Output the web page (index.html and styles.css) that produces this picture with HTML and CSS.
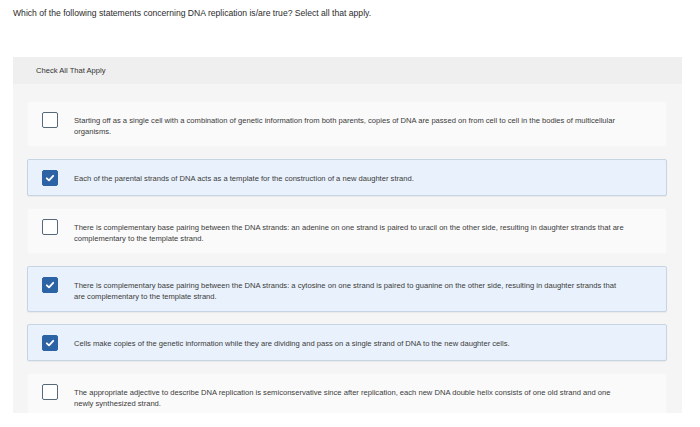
FILE: index.html
```html
<!DOCTYPE html>
<html>
<head>
<meta charset="utf-8">
<link rel="stylesheet" href="styles.css">
</head>
<body>
<p class="question">Which of the following statements concerning DNA replication is/are true? Select all that apply.</p>
<section class="panel">
  <div class="panel-head">Check All That Apply</div>
  <div class="panel-body">
    <div class="option">
      <span class="box"></span>
      <span class="label">Starting off as a single cell with a combination of genetic information from both parents, copies of DNA are passed on from cell to cell in the bodies of multicellular organisms.</span>
    </div>
    <div class="option checked">
      <span class="box"><svg viewBox="0 0 16 16" width="16" height="16"><path d="M4.8 8.3 L7 10.4 L11.2 5.8" fill="none" stroke="#fff" stroke-width="1.8" stroke-linecap="round" stroke-linejoin="round"/></svg></span>
      <span class="label">Each of the parental strands of DNA acts as a template for the construction of a new daughter strand.</span>
    </div>
    <div class="option">
      <span class="box"></span>
      <span class="label">There is complementary base pairing between the DNA strands: an adenine on one strand is paired to uracil on the other side, resulting in daughter strands that are complementary to the template strand.</span>
    </div>
    <div class="option checked">
      <span class="box"><svg viewBox="0 0 16 16" width="16" height="16"><path d="M4.8 8.3 L7 10.4 L11.2 5.8" fill="none" stroke="#fff" stroke-width="1.8" stroke-linecap="round" stroke-linejoin="round"/></svg></span>
      <span class="label">There is complementary base pairing between the DNA strands: a cytosine on one strand is paired to guanine on the other side, resulting in daughter strands that are complementary to the template strand.</span>
    </div>
    <div class="option checked">
      <span class="box"><svg viewBox="0 0 16 16" width="16" height="16"><path d="M4.8 8.3 L7 10.4 L11.2 5.8" fill="none" stroke="#fff" stroke-width="1.8" stroke-linecap="round" stroke-linejoin="round"/></svg></span>
      <span class="label">Cells make copies of the genetic information while they are dividing and pass on a single strand of DNA to the new daughter cells.</span>
    </div>
    <div class="option">
      <span class="box"></span>
      <span class="label">The appropriate adjective to describe DNA replication is semiconservative since after replication, each new DNA double helix consists of one old strand and one newly synthesized strand.</span>
    </div>
  </div>
</section>
</body>
</html>
```

FILE: styles.css
```css
html, body {
  margin: 0;
  padding: 0;
  background: #fff;
  overflow: hidden;
}
body {
  width: 700px;
  height: 427px;
  font-family: "Liberation Sans", Arial, sans-serif;
  color: #333;
}
.question {
  margin: 0;
  padding: 8px 0 0 13px;
  font-size: 8.6px;
  line-height: 11px;
  color: #2b2b2b;
}
.panel {
  margin: 38px 0 0 13px;
  width: 669px;
  height: 356px;
  background: #f5f5f5;
  overflow: hidden;
}
.panel-head {
  height: 27px;
  background: #efefef;
  padding-left: 23px;
  font-size: 7.6px;
  line-height: 28px;
  color: #333;
}
.panel-body {
  padding: 17px 15px 0 14px;
  display: flex;
  flex-direction: column;
  gap: 12px;
}
.option {
  display: flex;
  align-items: flex-start;
  gap: 16px;
  padding: 10px 40px 9px 14px;
  background: #fafafa;
  border: 1px solid #f6f6f6;
  border-radius: 2px;
}
.option.checked {
  background: #e9f2fc;
  border-color: #c7d4e3;
  box-shadow: 0 1px 1px rgba(0,0,0,0.05);
}
.box {
  flex: none;
  width: 16px;
  height: 16px;
  box-sizing: border-box;
  border: 1.5px solid #56687c;
  border-radius: 2px;
  background: #fff;
  position: relative;
}
.checked .box {
  background: #2c63a5;
  border-color: #2c63a5;
}
.box svg {
  position: absolute;
  left: -1.5px;
  top: -1.5px;
}
.label {
  padding-top: 3px;
  font-size: 7.6px;
  line-height: 11px;
  color: #3a3a3a;
}
```
